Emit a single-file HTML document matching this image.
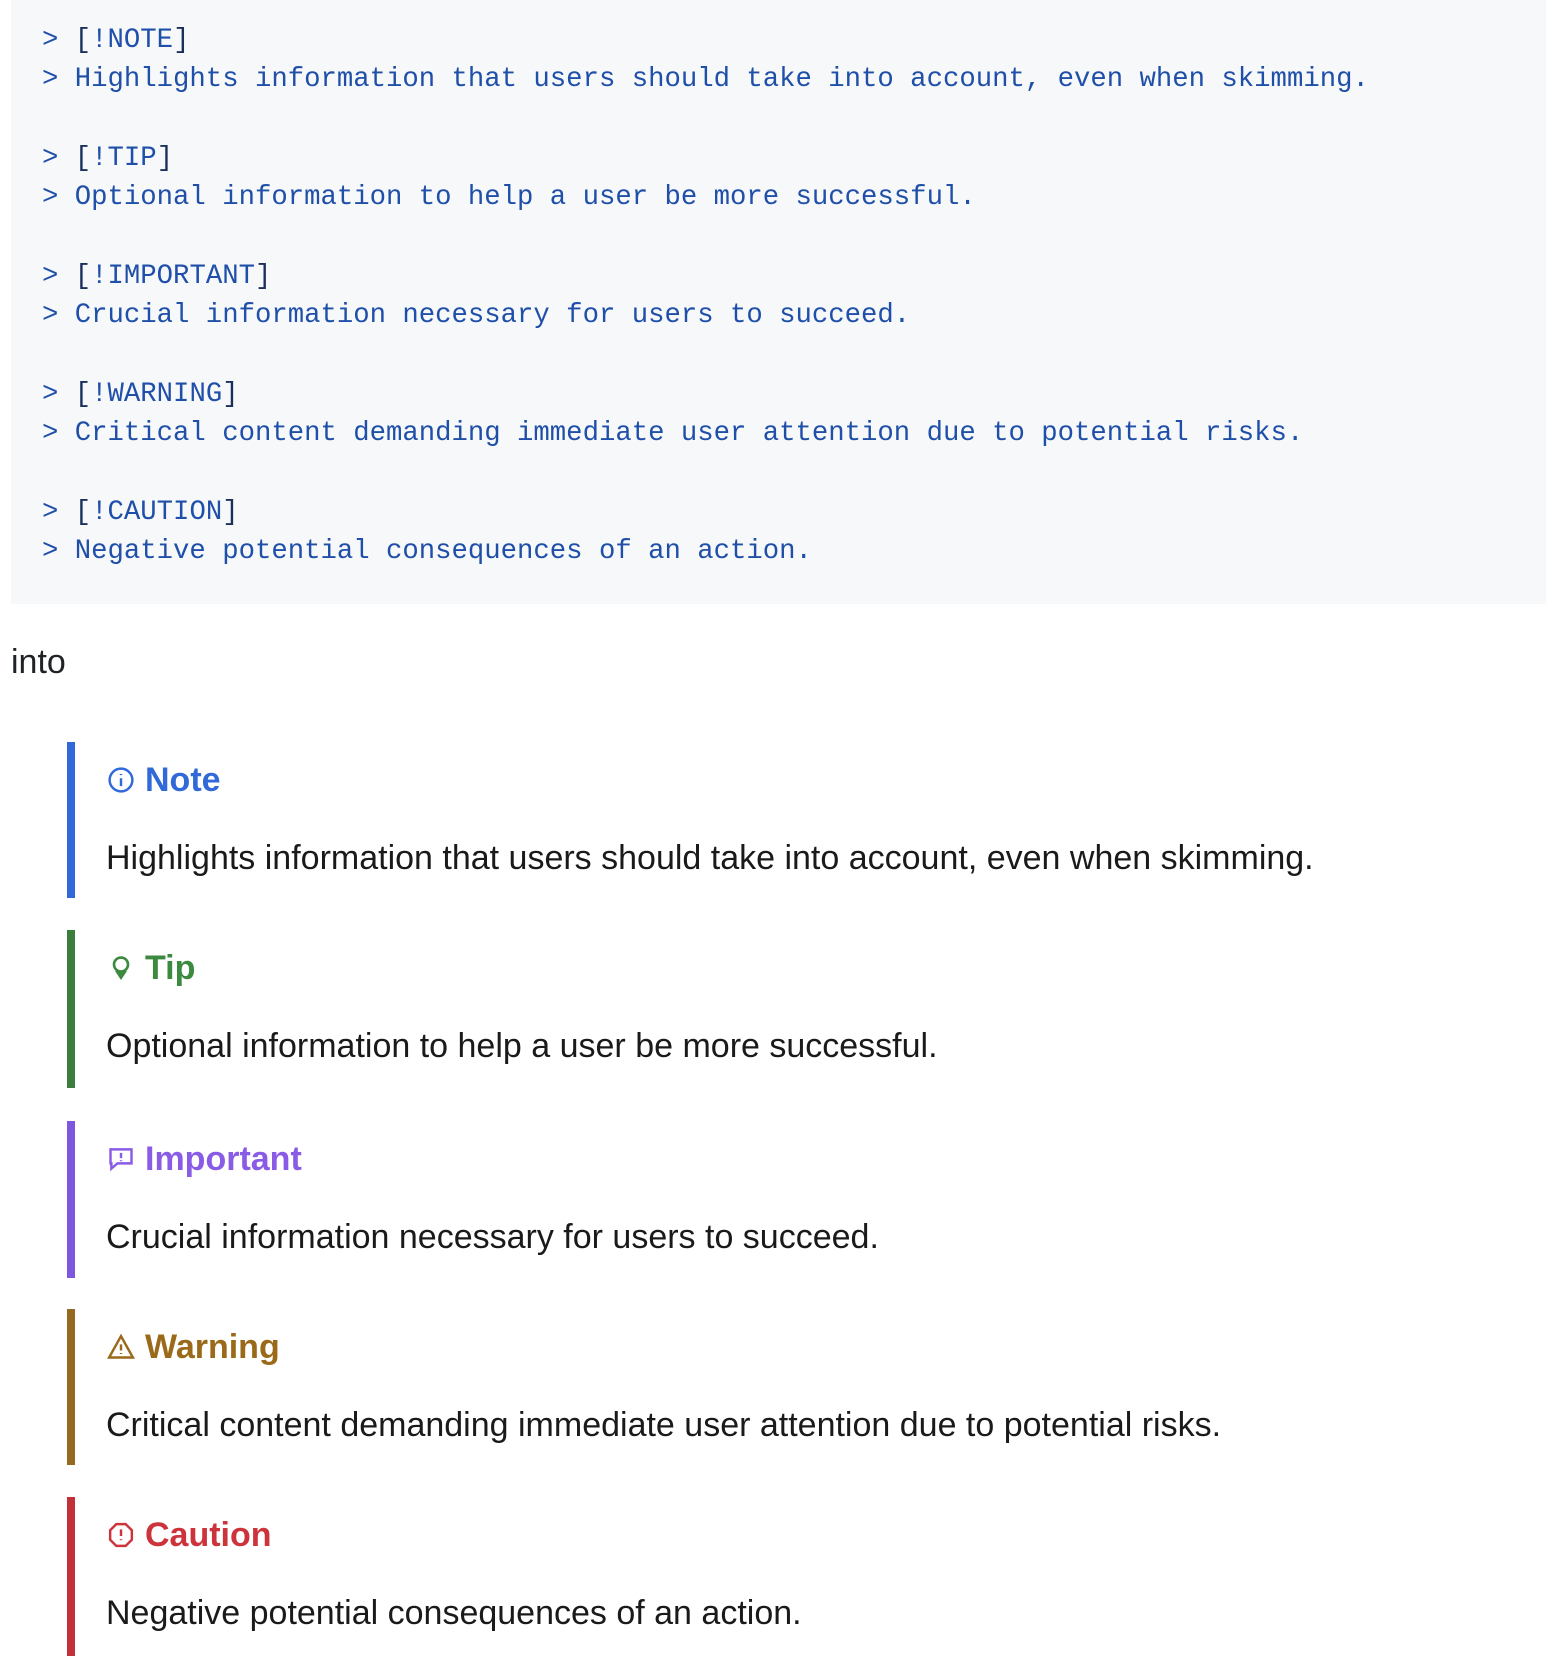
<!DOCTYPE html>
<html><head><meta charset="utf-8"><style>
html,body{margin:0;padding:0;background:#fff;width:1546px;height:1674px;overflow:hidden;position:relative}
.code{position:absolute;left:11px;top:0;width:1535px;height:604px;background:#f6f8fa}
.code pre{margin:0;position:absolute;left:31px;top:21px;font-family:"Liberation Mono",monospace;font-size:27.3px;line-height:39.3px;color:#1f4fa8;white-space:pre}
.code b{font-weight:normal;color:#1c2f5c}
.into{position:absolute;left:11px;top:642px;font-family:"Liberation Sans",sans-serif;font-size:34px;line-height:40px;color:#1f2328}
.c{position:absolute;left:67px;width:8px}
.t{position:absolute;left:145px;font-family:"Liberation Sans",sans-serif;font-weight:bold;font-size:34px;line-height:40px}
.b{position:absolute;left:106px;font-family:"Liberation Sans",sans-serif;font-size:34px;line-height:40px;color:#1a1a1a}
svg.i{position:absolute;left:107px;width:28px;height:28px}
</style></head><body>
<div class="code"><pre>&gt; <b>[</b>!NOTE<b>]</b>
&gt; Highlights information that users should take into account, even when skimming.

&gt; <b>[</b>!TIP<b>]</b>
&gt; Optional information to help a user be more successful.

&gt; <b>[</b>!IMPORTANT<b>]</b>
&gt; Crucial information necessary for users to succeed.

&gt; <b>[</b>!WARNING<b>]</b>
&gt; Critical content demanding immediate user attention due to potential risks.

&gt; <b>[</b>!CAUTION<b>]</b>
&gt; Negative potential consequences of an action.</pre></div>
<div class="into">into</div>

<div class="c" style="top:742px;height:156px;background:#316ad8"></div>
<svg class="i" style="top:766px" viewBox="0 0 16 16" fill="none" stroke="#316ad8" stroke-width="1.4"><circle cx="8" cy="8" r="6.5"/><path d="M8 7v4.5M8 4.6v.6"/></svg>
<div class="t" style="top:760px;color:#316ad8">Note</div>
<div class="b" style="top:838px">Highlights information that users should take into account, even when skimming.</div>

<div class="c" style="top:930px;height:158px;background:#3b7d3d"></div>
<svg class="i" style="top:954px" viewBox="0 0 16 16" fill="none" stroke="#3b8a3f" stroke-width="1.5"><circle cx="8" cy="6" r="4"/><path d="M6 10.5h4l-2 3z" fill="#3b8a3f"/></svg>
<div class="t" style="top:948px;color:#3b8a3f">Tip</div>
<div class="b" style="top:1026px">Optional information to help a user be more successful.</div>

<div class="c" style="top:1121px;height:157px;background:#7d57de"></div>
<svg class="i" style="top:1145px" viewBox="0 0 16 16" fill="none" stroke="#8a5ce6" stroke-width="1.4"><path d="M2 2.5h12v8H6l-3.5 3v-3H2z"/><path d="M8 4.5v3M8 8.7v.6"/></svg>
<div class="t" style="top:1139px;color:#8a5ce6">Important</div>
<div class="b" style="top:1217px">Crucial information necessary for users to succeed.</div>

<div class="c" style="top:1309px;height:156px;background:#946a20"></div>
<svg class="i" style="top:1333px" viewBox="0 0 16 16" fill="none" stroke="#9a6a1a" stroke-width="1.4"><path d="M8 1.8L14.8 14H1.2z"/><path d="M8 6.5v3.5M8 11.4v.6"/></svg>
<div class="t" style="top:1327px;color:#9a6a1a">Warning</div>
<div class="b" style="top:1405px">Critical content demanding immediate user attention due to potential risks.</div>

<div class="c" style="top:1497px;height:159px;background:#c2303a"></div>
<svg class="i" style="top:1521px" viewBox="0 0 16 16" fill="none" stroke="#cc333b" stroke-width="1.4"><path d="M5.3 1.8h5.4l3.5 3.5v5.4l-3.5 3.5H5.3l-3.5-3.5V5.3z"/><path d="M8 4.8v3.8M8 10.4v.6"/></svg>
<div class="t" style="top:1515px;color:#cc333b">Caution</div>
<div class="b" style="top:1593px">Negative potential consequences of an action.</div>
</body></html>
